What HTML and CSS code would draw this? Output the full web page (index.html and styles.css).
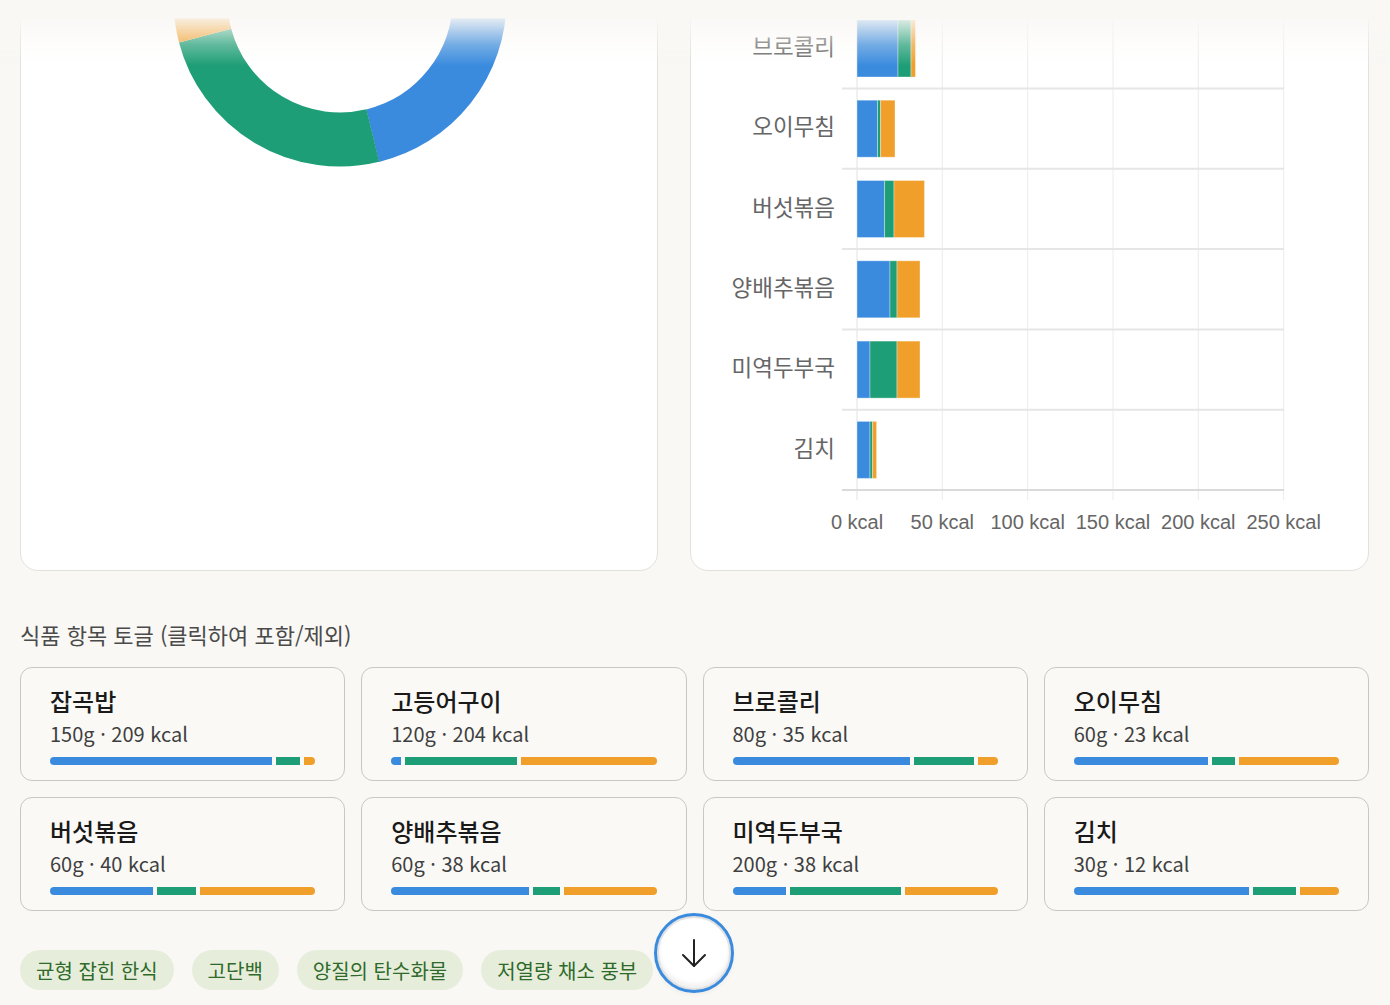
FILE: index.html
```html
<!DOCTYPE html>
<html lang="ko">
<head>
<meta charset="utf-8">
<title>식단 분석</title>
<link rel="stylesheet" href="styles.css">
</head>
<body>
<div class="fade-top"></div>
<main class="page">
  <section class="charts">
    <div class="chart-card">
      <svg class="chart-svg" width="636" height="769" viewBox="21 -199 636 769">
        <g fill="none" stroke-width="54">
          <circle cx="340" cy="0" r="139.5" stroke="#3a8bde" stroke-dasharray="405.1 876.5" transform="rotate(-90 340 0)"/>
          <circle cx="340" cy="0" r="139.5" stroke="#1e9e76" stroke-dasharray="216.2 876.5" transform="rotate(76.4 340 0)"/>
          <circle cx="340" cy="0" r="139.5" stroke="#f09f2b" stroke-dasharray="255.2 876.5" transform="rotate(165.2 340 0)"/>
        </g>
      </svg>
    </div>
    <div class="chart-card">
      <svg class="chart-svg" width="677" height="769" viewBox="691 -199 677 769">
        <g stroke="#ececec" stroke-width="1">
          <line x1="857" y1="-152" x2="857" y2="500" stroke="#e2e2e2"/>
          <line x1="942.3" y1="-152" x2="942.3" y2="500"/>
          <line x1="1027.7" y1="-152" x2="1027.7" y2="500"/>
          <line x1="1113" y1="-152" x2="1113" y2="500"/>
          <line x1="1198.3" y1="-152" x2="1198.3" y2="500"/>
          <line x1="1283.7" y1="-152" x2="1283.7" y2="500"/>
        </g>
        <g stroke="#e6e6e6" stroke-width="2">
          <line x1="842" y1="-152" x2="1284" y2="-152"/>
          <line x1="842" y1="-72" x2="1284" y2="-72"/>
          <line x1="842" y1="8" x2="1284" y2="8"/>
          <line x1="842" y1="88.5" x2="1284" y2="88.5"/>
          <line x1="842" y1="168.8" x2="1284" y2="168.8"/>
          <line x1="842" y1="249.1" x2="1284" y2="249.1"/>
          <line x1="842" y1="329.4" x2="1284" y2="329.4"/>
          <line x1="842" y1="409.7" x2="1284" y2="409.7"/>
          <line x1="842" y1="490" x2="1284" y2="490" stroke="#dadada"/>
        </g>
        <g class="bars">
          <rect x="857" y="-140.7" width="307.8" height="57" fill="#3a8bde"/>
          <rect x="1164.8" y="-140.7" width="33.5" height="57" fill="#1e9e76"/>
          <rect x="1198.3" y="-140.7" width="15.3" height="57" fill="#f09f2b"/>

          <rect x="857" y="-60.4" width="13.6" height="57" fill="#3a8bde"/>
          <rect x="870.6" y="-60.4" width="151.3" height="57" fill="#1e9e76"/>
          <rect x="1021.9" y="-60.4" width="183.2" height="57" fill="#f09f2b"/>

          <rect x="857" y="20" width="41" height="57" fill="#3a8bde"/>
          <rect x="898" y="20" width="13" height="57" fill="#1e9e76"/>
          <rect x="911" y="20" width="4.5" height="57" fill="#f09f2b"/>

          <rect x="857" y="100.2" width="20.5" height="57" fill="#3a8bde"/>
          <rect x="877.5" y="100.2" width="3.1" height="57" fill="#1e9e76"/>
          <rect x="880.6" y="100.2" width="14.4" height="57" fill="#f09f2b"/>

          <rect x="857" y="180.5" width="27.6" height="57" fill="#3a8bde"/>
          <rect x="884.6" y="180.5" width="9.4" height="57" fill="#1e9e76"/>
          <rect x="894" y="180.5" width="30.5" height="57" fill="#f09f2b"/>

          <rect x="857" y="260.8" width="33" height="57" fill="#3a8bde"/>
          <rect x="890" y="260.8" width="7" height="57" fill="#1e9e76"/>
          <rect x="897" y="260.8" width="23" height="57" fill="#f09f2b"/>

          <rect x="857" y="341.1" width="13" height="57" fill="#3a8bde"/>
          <rect x="870" y="341.1" width="27" height="57" fill="#1e9e76"/>
          <rect x="897" y="341.1" width="23" height="57" fill="#f09f2b"/>

          <rect x="857" y="421.4" width="13" height="57" fill="#3a8bde"/>
          <rect x="870" y="421.4" width="2.6" height="57" fill="#1e9e76"/>
          <rect x="872.6" y="421.4" width="4" height="57" fill="#f09f2b"/>
        </g>
        <g class="cat-labels" text-anchor="end">
          <text x="835" y="-113">잡곡밥</text>
          <text x="835" y="-33">고등어구이</text>
          <text x="835" y="47">브로콜리</text>
          <text x="835" y="127.5">오이무침</text>
          <text x="835" y="208">버섯볶음</text>
          <text x="835" y="288">양배추볶음</text>
          <text x="835" y="368.5">미역두부국</text>
          <text x="835" y="449">김치</text>
        </g>
        <g class="tick-labels" text-anchor="middle">
          <text x="857" y="522">0 kcal</text>
          <text x="942.3" y="522">50 kcal</text>
          <text x="1027.7" y="522">100 kcal</text>
          <text x="1113" y="522">150 kcal</text>
          <text x="1198.3" y="522">200 kcal</text>
          <text x="1283.7" y="522">250 kcal</text>
        </g>
      </svg>
    </div>
  </section>

  <section class="foods">
    <h2 class="foods-title">식품 항목 토글 (클릭하여 포함/제외)</h2>
    <div class="food-grid">
      <div class="food-card">
        <div class="food-name">잡곡밥</div>
        <div class="food-meta">150g · 209 kcal</div>
        <div class="macro-bar"><span class="seg carb" style="flex-grow:221"></span><span class="seg prot" style="flex-grow:24"></span><span class="seg fat" style="flex-grow:11"></span></div>
      </div>
      <div class="food-card">
        <div class="food-name">고등어구이</div>
        <div class="food-meta">120g · 204 kcal</div>
        <div class="macro-bar"><span class="seg carb" style="flex-grow:10"></span><span class="seg prot" style="flex-grow:111.5"></span><span class="seg fat" style="flex-grow:135"></span></div>
      </div>
      <div class="food-card">
        <div class="food-name">브로콜리</div>
        <div class="food-meta">80g · 35 kcal</div>
        <div class="macro-bar"><span class="seg carb" style="flex-grow:177"></span><span class="seg prot" style="flex-grow:59"></span><span class="seg fat" style="flex-grow:20"></span></div>
      </div>
      <div class="food-card">
        <div class="food-name">오이무침</div>
        <div class="food-meta">60g · 23 kcal</div>
        <div class="macro-bar"><span class="seg carb" style="flex-grow:134"></span><span class="seg prot" style="flex-grow:23"></span><span class="seg fat" style="flex-grow:100"></span></div>
      </div>
      <div class="food-card">
        <div class="food-name">버섯볶음</div>
        <div class="food-meta">60g · 40 kcal</div>
        <div class="macro-bar"><span class="seg carb" style="flex-grow:103"></span><span class="seg prot" style="flex-grow:39"></span><span class="seg fat" style="flex-grow:115"></span></div>
      </div>
      <div class="food-card">
        <div class="food-name">양배추볶음</div>
        <div class="food-meta">60g · 38 kcal</div>
        <div class="macro-bar"><span class="seg carb" style="flex-grow:137"></span><span class="seg prot" style="flex-grow:26"></span><span class="seg fat" style="flex-grow:92"></span></div>
      </div>
      <div class="food-card">
        <div class="food-name">미역두부국</div>
        <div class="food-meta">200g · 38 kcal</div>
        <div class="macro-bar"><span class="seg carb" style="flex-grow:53"></span><span class="seg prot" style="flex-grow:110"></span><span class="seg fat" style="flex-grow:92"></span></div>
      </div>
      <div class="food-card">
        <div class="food-name">김치</div>
        <div class="food-meta">30g · 12 kcal</div>
        <div class="macro-bar"><span class="seg carb" style="flex-grow:174"></span><span class="seg prot" style="flex-grow:43"></span><span class="seg fat" style="flex-grow:38.6"></span></div>
      </div>
    </div>
  </section>

  <div class="tags">
    <span class="tag">균형 잡힌 한식</span>
    <span class="tag">고단백</span>
    <span class="tag">양질의 탄수화물</span>
    <span class="tag">저열량 채소 풍부</span>
  </div>
</main>

<button class="scroll-btn" type="button" aria-label="아래로 스크롤">
  <svg width="30" height="30" viewBox="0 0 30 30" fill="none" stroke="#222" stroke-width="2" stroke-linecap="round" stroke-linejoin="round">
    <path d="M15 2 V28"/>
    <path d="M4 17 L15 28 L26 17"/>
  </svg>
</button>
</body>
</html>
```

FILE: styles.css
```css
* { box-sizing: border-box; }

html, body {
  margin: 0;
  padding: 0;
  background: #f9f8f5;
}

body {
  font-family: "Noto Sans CJK KR", "Noto Sans", sans-serif;
  color: #1c1c1c;
  overflow: hidden;
}

.fade-top {
  position: fixed;
  top: 0;
  left: 0;
  right: 0;
  height: 66px;
  z-index: 5;
  pointer-events: none;
  background: linear-gradient(to bottom,
    #f9f8f5 0px,
    #f9f8f5 18px,
    rgba(249, 248, 245, 0.88) 19px,
    rgba(249, 248, 245, 0.3) 45px,
    rgba(249, 248, 245, 0) 66px);
}

.page {
  padding: 0 21px 0 20px;
}

/* page is shown scrolled: chart cards start above the viewport */
.charts {
  display: grid;
  grid-template-columns: 638px 679px;
  column-gap: 32px;
  margin-top: -200px;
}

.chart-card {
  height: 771px;
  background: #ffffff;
  border: 1px solid #e3e1dc;
  border-radius: 18px;
  overflow: hidden;
}

.chart-svg {
  display: block;
}

.cat-labels text {
  font-family: "Liberation Sans", "Noto Sans CJK KR", sans-serif;
  font-size: 22.5px;
  fill: #666666;
  dominant-baseline: central;
}

.tick-labels text {
  font-family: "Liberation Sans", Arial, sans-serif;
  font-size: 20px;
  fill: #666666;
  dominant-baseline: central;
}

.bars rect {
  stroke: rgba(255, 255, 255, 0.35);
  stroke-width: 1;
}

.foods {
  margin-top: 49px;
}

.foods-title {
  margin: 0 0 19px;
  font-size: 22px;
  line-height: 28px;
  font-weight: 400;
  color: #4a4a4a;
}

.food-grid {
  display: grid;
  grid-template-columns: repeat(4, 1fr);
  gap: 16px;
}

.food-card {
  background: #faf9f6;
  border: 1px solid #c9c7c1;
  border-radius: 12px;
  padding: 18px 29px 15px;
  height: 114px;
}

.food-name {
  font-size: 24px;
  line-height: 30px;
  font-weight: 500;
  color: #1a1a1a;
}

.food-meta {
  margin-top: 4px;
  font-size: 20px;
  line-height: 28px;
  color: #3f3f3f;
}

.macro-bar {
  display: flex;
  gap: 4px;
  height: 8px;
  margin-top: 9px;
  border-radius: 4px;
  overflow: hidden;
}

.seg {
  flex-basis: 0;
  display: block;
  height: 100%;
}

.seg.carb { background: #3a8bde; }
.seg.prot { background: #1e9e76; }
.seg.fat { background: #f09f2b; }

.tags {
  display: flex;
  gap: 18px;
  margin-top: 39px;
}

.tag {
  display: inline-flex;
  align-items: center;
  height: 40px;
  padding: 0 16px;
  border-radius: 20px;
  background: #e6eedb;
  color: #2f6a2a;
  font-size: 20px;
}

.scroll-btn {
  position: fixed;
  left: calc(50% - 38px);
  bottom: 15px;
  width: 74px;
  height: 74px;
  padding: 0;
  border-radius: 50%;
  border: 2px solid #e2e2e2;
  background: #ffffff;
  outline: 3px solid #3a8bde;
  outline-offset: 0;
  box-shadow: inset 0 -4px 4px rgba(0, 0, 0, 0.06), 0 2px 6px rgba(0, 0, 0, 0.12);
  display: flex;
  align-items: center;
  justify-content: center;
  cursor: pointer;
  z-index: 10;
}
```
